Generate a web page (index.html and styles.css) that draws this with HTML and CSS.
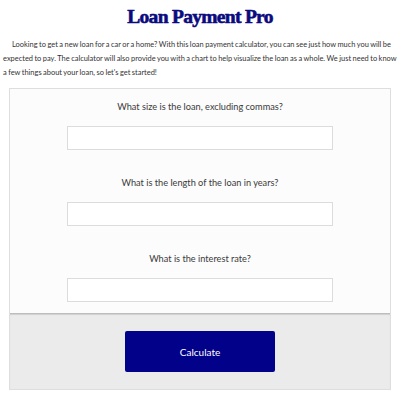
FILE: index.html
```html
<!DOCTYPE html>
<html>
<head>
<meta charset="utf-8">
<link rel="stylesheet" href="styles.css">
</head>
<body>
<h1 class="title">Loan Payment Pro</h1>
<p class="intro">Looking to get a new loan for a car or a home? With this loan payment calculator, you can see just how much you will be expected to pay. The calculator will also provide you with a chart to help visualize the loan as a whole. We just need to know a few things about your loan, so let's get started!</p>
<div class="card">
  <div class="form">
    <label class="field">
      <span class="label">What size is the loan, excluding commas?</span>
      <input class="input" type="text">
    </label>
    <label class="field">
      <span class="label">What is the length of the loan in years?</span>
      <input class="input" type="text">
    </label>
    <label class="field">
      <span class="label">What is the interest rate?</span>
      <input class="input" type="text">
    </label>
  </div>
  <div class="footer">
    <button class="btn" type="button">Calculate</button>
  </div>
</div>
</body>
</html>
```
FILE: styles.css
```css
* { box-sizing: border-box; }
html, body { margin: 0; padding: 0; background: #fff; }
body {
  font-family: Lato, "Open Sans", sans-serif;
  color: #333;
}
.title {
  margin: 0;
  padding-top: 4px;
  height: 34px;
  text-align: center;
  font-family: "Liberation Serif", serif;
  font-weight: 700;
  font-size: 19.5px;
  line-height: 26px;
  color: #0b0a7e;
  letter-spacing: -0.7px;
  -webkit-text-stroke: 0.6px #0b0a7e;
}
.intro {
  margin: 4px 3px 0 3px;
  font-size: 7.45px;
  line-height: 14px;
  text-indent: 9px;
  word-spacing: -0.4px;
  color: #333;
  text-align: left;
}
.card {
  margin: 8px 9px 0 9px;
  border: 1px solid #dedede;
  background: #fcfcfc;
  display: flex;
  flex-direction: column;
}
.form {
  display: flex;
  flex-direction: column;
  align-items: center;
  padding: 11px 0 11px;
  gap: 26px;
}
.field {
  display: flex;
  flex-direction: column;
  align-items: center;
  gap: 12px;
}
.label {
  font-size: 9.2px;
  line-height: 14px;
  color: #3a3a3a;
}
.input {
  width: 266px;
  height: 24px;
  border: 1px solid #dcdcdc;
  background: #fff;
  margin: 0;
  padding: 0;
}
.footer {
  background: #ebebeb;
  border-top: 1px solid #bdbdbd;
  box-shadow: inset 0 1px 1px #d0d0d0;
  display: flex;
  justify-content: center;
  padding: 17px 0 17px;
}
.btn {
  width: 150px;
  height: 41px;
  background: #02018a;
  color: #fff;
  border: none;
  border-radius: 2px;
  font-family: Lato, "Open Sans", sans-serif;
  font-size: 10px;
  cursor: pointer;
}
```
